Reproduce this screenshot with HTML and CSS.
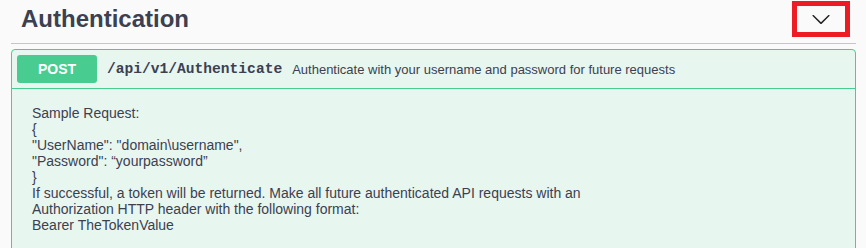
FILE: index.html
```html
<!DOCTYPE html>
<html lang="en">
<head>
  <meta charset="UTF-8" />
  <title>Authentication</title>
  <link rel="stylesheet" href="styles.css">
</head>
<body>
  <div class="wrapper">
    <div class="tag-section">
      <h3 class="tag-header">
        <span class="tag-title">Authentication</span>
        <button class="expand">
          <svg width="20" height="20" viewBox="0 0 20 20">
            <path d="M17.418 6.109c.272-.268.709-.268.979 0s.271.701 0 .969l-7.908 7.83c-.27.268-.707.268-.979 0l-7.908-7.83c-.27-.268-.27-.701 0-.969.271-.268.709-.268.979 0L10 13.25l7.418-7.141z"/>
          </svg>
        </button>
      </h3>

      <div class="opblock">
        <div class="opblock-summary">
          <span class="method">POST</span>
          <span class="path">/api/v1/Authenticate</span>
          <span class="summary-text">Authenticate with your username and password for future requests</span>
        </div>
        <div class="opblock-body">
          Sample Request:<br>
          {<br>
          "UserName": "domain\username",<br>
          "Password": “yourpassword”<br>
          }<br>
          If successful, a token will be returned. Make all future authenticated API requests with an<br>
          Authorization HTTP header with the following format:<br>
          Bearer TheTokenValue
        </div>
      </div>
    </div>
  </div>
</body>
</html>
```

FILE: styles.css
```css
body {
  margin: 0;
  padding: 0;
  background: #fafafa;
  font-family: "Liberation Sans", Arial, sans-serif;
  color: #3b4151;
  overflow: hidden;
}
.wrapper {
  padding: 0 10px 0 11px;
}
.tag-header {
  display: flex;
  align-items: center;
  justify-content: space-between;
  margin: 0;
  padding: 1px 6px 6px 10px;
  border-bottom: 1px solid #c4c6ca;
}
.tag-title {
  font-size: 24px;
  font-weight: bold;
  line-height: 36px;
}
.expand {
  display: flex;
  align-items: center;
  justify-content: center;
  width: 58px;
  height: 36px;
  padding: 0;
  background: none;
  border: 5px solid #ed1c24;
  cursor: pointer;
}
.expand svg {
  fill: #222;
}
.opblock {
  margin-top: 5px;
  border: 1px solid #49cc90;
  border-radius: 4px;
  background: #e8f6f0;
  height: 400px;
}
.opblock-summary {
  display: flex;
  align-items: center;
  padding: 5px;
  border-bottom: 1px solid #49cc90;
}
.method {
  width: 80px;
  height: 28px;
  line-height: 28px;
  text-align: center;
  border-radius: 3px;
  background: #49cc90;
  color: #fff;
  font-size: 14px;
  font-weight: bold;
}
.path {
  padding: 0 10px;
  font-family: "Liberation Mono", "DejaVu Sans Mono", monospace;
  font-size: 14.6px;
  font-weight: bold;
}
.summary-text {
  font-size: 13px;
}
.opblock-body {
  padding: 16px 20px;
  font-size: 14px;
  line-height: 16px;
}
```
